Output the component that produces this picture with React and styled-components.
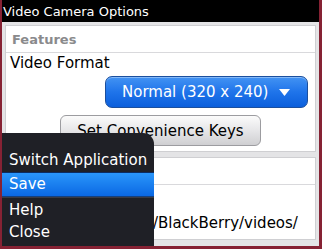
import React from "react"
import styled, { createGlobalStyle } from "styled-components"

const GlobalStyle = createGlobalStyle`
    html, body {
        margin: 0;
        padding: 0;
        background: #ffffff;
    }
    * {
        box-sizing: border-box;
    }
`

const menuItems = [
    { label: "Switch Application", kind: "plain" },
    { label: "Save", kind: "selected" },
    { kind: "separator" },
    { label: "Help", kind: "plain" },
    { label: "Close", kind: "plain" },
]

export default function App() {
    return (
        <>
            <GlobalStyle />
            <Screen>
                <TitleBar>Video Camera Options</TitleBar>
                <Content>
                    <Panel>
                        <SectionHeader>Features</SectionHeader>
                        <Body>
                            <Label>Video Format</Label>
                            <ChoiceRow>
                                <ChoiceButton>
                                    <span>Normal (320 x 240)</span>
                                    <svg width="11" height="7" viewBox="0 0 11 7">
                                        <polygon points="0,0 11,0 5.5,7" fill="#ffffff" />
                                    </svg>
                                </ChoiceButton>
                            </ChoiceRow>
                            <ButtonRow>
                                <PlainButton>Set Convenience Keys</PlainButton>
                            </ButtonRow>
                        </Body>
                    </Panel>
                    <Panel>
                        {/* header and first line sit behind the menu */}
                        <SectionHeader />
                        <PathBody>
                            <Line />
                            <PathLine>Media Card/BlackBerry/videos/</PathLine>
                        </PathBody>
                    </Panel>
                </Content>

                <Menu>
                    {menuItems.map((item, i) =>
                        item.kind === "separator"
                            ? <MenuSeparator key={i} />
                            : <MenuItem key={i} $selected={item.kind === "selected"}>{item.label}</MenuItem>
                    )}
                </Menu>
            </Screen>
        </>
    )
}

const Screen = styled.div`
    position: relative;
    width: 322px;
    height: 249px;
    overflow: hidden;
    border-left: 2px solid #862234;
    border-right: 3px solid #862234;
    border-bottom: 3px solid #862234;
    background: #e4e4e6;
    font-family: "DejaVu Sans", "Liberation Sans", sans-serif;
    display: flex;
    flex-direction: column;
`

const TitleBar = styled.div`
    height: 22px;
    padding: 2px 0 0 1px;
    line-height: 20px;
    font-size: 13px;
    color: #ffffff;
    background: #000000;
    white-space: nowrap;
`

const Content = styled.div`
    flex: 1;
    display: flex;
    flex-direction: column;
    gap: 5px;
    padding: 3px 3px 6px 3px;
`

const Panel = styled.section`
    background: #ffffff;
    border: 1px solid #cfcfd2;
    display: flex;
    flex-direction: column;
`

const SectionHeader = styled.div`
    height: 27px;
    padding: 2px 0 0 6px;
    line-height: 24px;
    font-size: 13px;
    font-weight: bold;
    color: #8a8a8c;
    border-bottom: 1px solid #d9d9dc;
`

const Body = styled.div`
    padding: 1px 7px 5px 4px;
    display: flex;
    flex-direction: column;
`

const Label = styled.div`
    font-size: 15px;
    line-height: 18px;
    color: #000000;
`

const ChoiceRow = styled.div`
    display: flex;
    justify-content: flex-end;
    margin-top: 4px;
`

const ChoiceButton = styled.button`
    width: 203px;
    height: 32px;
    padding: 0 15px 0 16px;
    display: flex;
    align-items: center;
    gap: 11px;
    font-family: inherit;
    font-size: 15px;
    color: #ffffff;
    border: 1px solid #1b4f9e;
    border-radius: 7px;
    background: linear-gradient(#4393f3 0%, #1f74ea 50%, #0b5fdc 100%);
    box-shadow: inset 0 1px 0 rgba(255, 255, 255, 0.35);
    white-space: nowrap;

    svg {
        margin-top: 1px;
    }
`

const ButtonRow = styled.div`
    display: flex;
    justify-content: center;
    margin-top: 7px;
    padding-left: 3px;
`

const PlainButton = styled.button`
    width: 201px;
    height: 31px;
    padding: 0;
    font-family: inherit;
    font-size: 15px;
    color: #000000;
    border: 1px solid #9c9ca0;
    border-radius: 6px;
    background: linear-gradient(#fbfbfb 0%, #e6e6e8 50%, #cfcfd2 100%);
    white-space: nowrap;
`

const PathBody = styled.div`
    padding: 4px 4px 4px 6px;
`

const Line = styled.div`
    height: 23px;
    font-size: 15px;
    line-height: 23px;
    color: #000000;
    white-space: nowrap;
`

const PathLine = styled(Line)`
    padding-left: 56px;
`

const Menu = styled.div`
    position: absolute;
    left: 0;
    top: 133px;
    width: 152px;
    bottom: 0;
    padding: 16px 0 3px 0;
    background: #1f2026;
    border-top-right-radius: 11px;
    display: flex;
    flex-direction: column;
`

const MenuItem = styled.div`
    height: ${p => (p.$selected ? "25px" : "22px")};
    padding-left: 7px;
    line-height: ${p => (p.$selected ? "23px" : "22px")};
    font-size: 15px;
    color: #ffffff;
    white-space: nowrap;
    border-top: ${p => (p.$selected ? "1px solid #0c2c62" : "none")};
    border-bottom: ${p => (p.$selected ? "1px solid #14407e" : "none")};
    background: ${p => (p.$selected ? "linear-gradient(#2a96fa, #0a68e4)" : "transparent")};

    &:first-child {
        height: 23px;
        line-height: 23px;
    }
`

const MenuSeparator = styled.div`
    height: 2px;
    border-top: 1px solid #3a3b44;
`
